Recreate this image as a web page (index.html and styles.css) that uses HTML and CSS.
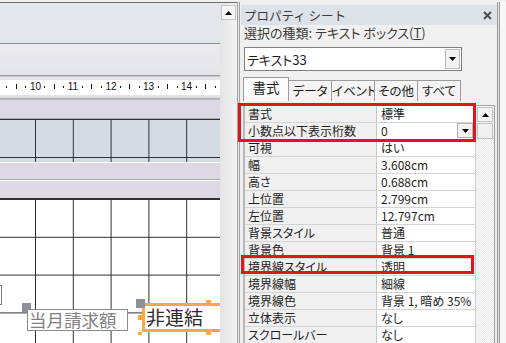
FILE: index.html
```html
<!DOCTYPE html>
<html lang="ja">
<head>
    <meta charset="utf-8">
    <title>プロパティ シート</title>
    <link rel="stylesheet" href="styles.css">
</head>
<body>
<div class="screen">
    <div class="design">
        <div class="sec-top"></div>
        <div class="sec-head"></div>
        <div class="ruler-wrap">
            <svg class="ruler" width="220" height="15" viewBox="0 0 220 15">
                <g fill="#111">
                    <rect x="6" y="6" width="1" height="2"/><rect x="16" y="4" width="1" height="5"/><rect x="25" y="6" width="1" height="2"/>
                    <rect x="44" y="6" width="1" height="2"/><rect x="54" y="4" width="1" height="5"/><rect x="63" y="6" width="1" height="2"/>
                    <rect x="82" y="6" width="1" height="2"/><rect x="91" y="4" width="1" height="5"/><rect x="101" y="6" width="1" height="2"/>
                    <rect x="120" y="6" width="1" height="2"/><rect x="129" y="4" width="1" height="5"/><rect x="139" y="6" width="1" height="2"/>
                    <rect x="158" y="6" width="1" height="2"/><rect x="167" y="4" width="1" height="5"/><rect x="177" y="6" width="1" height="2"/>
                    <rect x="196" y="6" width="1" height="2"/><rect x="205" y="4" width="1" height="5"/><rect x="215" y="6" width="1" height="2"/>
                </g>
                <g class="ruler-num" text-anchor="middle">
                    <text x="35.5" y="10">10</text>
                    <text x="73" y="10">11</text>
                    <text x="111" y="10">12</text>
                    <text x="148.5" y="10">13</text>
                    <text x="186.5" y="10">14</text>
                </g>
            </svg>
        </div>
        <div class="bar"></div>
        <div class="band"></div>
        <div class="bar bar-2"></div>
        <div class="bar bar-3"></div>
        <div class="detail">
            <div class="ctl-off"></div>
            <div class="grip grip-a"></div>
            <div class="ctl-label">当月請求額</div>
            <div class="ctl-text">非連結</div>
            <div class="grip grip-b"></div>
            <div class="knob knob-top"></div>
            <div class="knob knob-left"></div>
            <div class="knob knob-bl"></div>
            <div class="knob knob-bm"></div>
        </div>
    </div>

    <div class="vscroll">
        <div class="sbtn">
            <svg width="7" height="4" viewBox="0 0 7 4"><path d="M0 4h7L3.5 0z" fill="#000"/></svg>
        </div>
    </div>
    <div class="split"></div>

    <div class="props">
        <div class="props-title">
            <span>プロパティ シート</span>
            <svg width="9" height="9" viewBox="0 0 9 9"><path d="M1 1l7 7M8 1L1 8" stroke="#4e4e4e" stroke-width="2"/></svg>
        </div>
        <div class="props-type">選択の種類: テキスト ボックス(<u>T</u>)</div>
        <div class="combo">
            <span>テキスト33</span>
            <div class="combo-btn">
                <svg width="7" height="4" viewBox="0 0 7 4"><path d="M0 0h7L3.5 4z" fill="#000"/></svg>
            </div>
        </div>
        <div class="tabs">
            <div class="tab active">書式</div>
            <div class="tab">データ</div>
            <div class="tab">イベント</div>
            <div class="tab">その他</div>
            <div class="tab">すべて</div>
        </div>
        <div class="sheet">
            <div class="rows">
                <div class="row"><div class="key">書式</div><div class="val">標準</div></div>
                <div class="row"><div class="key">小数点以下表示桁数</div><div class="val">0
                    <div class="val-btn"><svg width="7" height="4" viewBox="0 0 7 4"><path d="M0 0h7L3.5 4z" fill="#000"/></svg></div>
                </div></div>
                <div class="row"><div class="key">可視</div><div class="val">はい</div></div>
                <div class="row"><div class="key">幅</div><div class="val">3.608cm</div></div>
                <div class="row"><div class="key">高さ</div><div class="val">0.688cm</div></div>
                <div class="row"><div class="key">上位置</div><div class="val">2.799cm</div></div>
                <div class="row"><div class="key">左位置</div><div class="val">12.797cm</div></div>
                <div class="row"><div class="key">背景スタイル</div><div class="val">普通</div></div>
                <div class="row"><div class="key">背景色</div><div class="val">背景 1</div></div>
                <div class="row"><div class="key">境界線スタイル</div><div class="val">透明</div></div>
                <div class="row"><div class="key">境界線幅</div><div class="val">細線</div></div>
                <div class="row"><div class="key">境界線色</div><div class="val">背景 1, 暗め 35%</div></div>
                <div class="row"><div class="key">立体表示</div><div class="val">なし</div></div>
                <div class="row"><div class="key">スクロールバー</div><div class="val">なし</div></div>
            </div>
            <div class="sheet-scroll">
                <div class="sbtn">
                    <svg width="7" height="4" viewBox="0 0 7 4"><path d="M0 4h7L3.5 0z" fill="#000"/></svg>
                </div>
                <div class="thumb"></div>
            </div>
        </div>
    </div>
    <div class="frame"></div>

    <div class="mark mark-1"></div>
    <div class="mark mark-2"></div>
</div>
</body>
</html>
```

FILE: styles.css
```css
html, body {
    margin: 0;
    background-color: #f0f0f0;
}

.screen {
    position: relative;
    display: flex;
    width: 506px;
    height: 343px;
    padding-top: 2px;
    box-sizing: border-box;
    overflow: hidden;
    font-family: "Noto Sans CJK JP", sans-serif;
    color: #1e1e1e;
}

/* left: form design view */
.design {
    width: 220px;
    flex: none;
    display: flex;
    flex-direction: column;
    border-top: 1px solid #6d6d6d;
    overflow: hidden;
}
.sec-top {
    height: 40px;
    background-color: #e3e6eb;
    border-bottom: 1px solid #8a8e95;
}
.sec-head {
    height: 31px;
    background: linear-gradient(#ececf0, #e3e4e9);
    border-bottom: 1px solid #9a9aa0;
}
.ruler-wrap {
    border-top: 1px solid #c6c6cb;
    padding: 3px 0 5px;
    background: linear-gradient(#e4e4e8 0 20px, #d6d6da 20px 21px, #b5b5bb 21px 23px, #e4e4e8 23px);
}
.ruler {
    display: block;
    background-color: #fff;
}
.ruler-num {
    font-family: "Liberation Sans", sans-serif;
    font-size: 10px;
    fill: #111;
}
.bar {
    height: 18px;
    background-color: #dcd9e4;
    border-bottom: 1px solid #a9a9b0;
}
.bar-2 {
    height: 16px;
    border-top: 1px solid #fff;
}
.bar-3 {
    height: 17px;
    border-top: 1px solid #fff;
    border-bottom-color: #2f2f2f;
}
.band {
    height: 43px;
    background-color: #d5dbe4;
    background-image:
        linear-gradient(#2f2f2f, #2f2f2f),
        linear-gradient(#2f2f2f, #2f2f2f),
        linear-gradient(to right, #2f2f2f 1px, transparent 1px);
    background-size: 100% 1px, 100% 1px, 37.8px 100%;
    background-position: 0 0, 0 38px, 35px 0;
    background-repeat: no-repeat, no-repeat, repeat;
}
.detail {
    position: relative;
    flex: 1;
    background-color: #fff;
    background-image:
        linear-gradient(#2f2f2f 1px, transparent 1px),
        linear-gradient(to right, #2f2f2f 1px, transparent 1px);
    background-size: 100% 37.8px, 37.8px 100%;
    background-position: 0 37.8px, 35px 0;
}
.ctl-off {
    position: absolute;
    left: -40px;
    top: 86px;
    width: 42px;
    height: 20px;
    box-sizing: border-box;
    border: 1px solid #7d7d7d;
    background-color: #fff;
}
.grip {
    position: absolute;
    width: 9px;
    height: 9px;
    background-color: #8b9099;
}
.grip-a { left: 22px; top: 104px; }
.grip-b { left: 136px; top: 100px; }
.ctl-label {
    position: absolute;
    left: 27px;
    top: 110px;
    width: 101px;
    height: 22px;
    box-sizing: border-box;
    border: 1px solid #8a8a8a;
    background-color: #fff;
    padding-left: 1px;
    font-size: 17.5px;
    line-height: 20px;
    color: #808080;
    white-space: nowrap;
}
.ctl-text {
    position: absolute;
    left: 142px;
    top: 104px;
    width: 110px;
    height: 29px;
    box-sizing: border-box;
    border: 3px solid #ffa83c;
    background-color: #fff;
    padding-left: 1px;
    font-size: 19px;
    line-height: 22px;
    color: #2b2b2b;
    white-space: nowrap;
}
.knob {
    position: absolute;
    background-color: #ffa83c;
}
.knob-top { left: 206px; top: 101px; width: 5px; height: 3px; }
.knob-left { left: 138px; top: 116px; width: 4px; height: 5px; }
.knob-bl { left: 138px; top: 133px; width: 4px; height: 3px; }
.knob-bm { left: 206px; top: 133px; width: 5px; height: 3px; }

.vscroll {
    width: 17px;
    flex: none;
    border-top: 1px solid #6d6d6d;
    background: linear-gradient(to right, #e4e4e4, #f2f2f2);
}
.sbtn {
    display: flex;
    align-items: center;
    justify-content: center;
    width: 15px;
    height: 15px;
    margin: 1px;
    box-sizing: border-box;
    background-color: #f5f5f5;
    border: 1px solid #c4c4c4;
}
.vscroll .sbtn {
    margin-top: 2px;
}
.split {
    width: 3px;
    flex: none;
    background: linear-gradient(to right, #a3a3a3 0 1px, #e6e6e6 1px 2px, #a3a3a3 2px);
}

/* right: property sheet */
.props {
    width: 257px;
    flex: none;
    padding-top: 3px;
    font-size: 12px;
    font-feature-settings: "palt";
}
.props-title {
    display: flex;
    align-items: center;
    justify-content: space-between;
    height: 20px;
    margin-left: 1px;
    padding: 0 5px 0 3px;
    background-color: #dde2e9;
    font-size: 12.5px;
    color: #3a3a3a;
    font-feature-settings: normal;
}
.props-type {
    height: 16px;
    line-height: 16px;
    padding-left: 4px;
    color: #3a3a3a;
    font-size: 13px;
    white-space: nowrap;
}
.combo {
    display: flex;
    align-items: center;
    justify-content: space-between;
    width: 218px;
    height: 24px;
    margin: 6px 0 0 4px;
    box-sizing: border-box;
    border: 1px solid #7f7f7f;
    background-color: #fff;
    padding-left: 2px;
    font-size: 13px;
}
.combo-btn {
    display: flex;
    align-items: center;
    justify-content: center;
    width: 15px;
    height: 20px;
    margin-right: 1px;
    box-sizing: border-box;
    background-color: #f2f2f2;
    border: 1px solid #b9b9b9;
}
.tabs {
    display: flex;
    align-items: flex-end;
    height: 24px;
    margin: 6px 0 0 3px;
}
.tab {
    width: 44px;
    height: 21px;
    box-sizing: border-box;
    margin-left: -1px;
    border: 1px solid #9c9c9c;
    border-bottom: none;
    background-color: #f4f4f4;
    text-align: center;
    line-height: 20px;
    font-size: 12.5px;
    white-space: nowrap;
}
.tab.active {
    width: 46px;
    height: 24px;
    margin-left: 0;
    background-color: #fbfbfb;
    font-size: 13.5px;
    line-height: 19px;
}

.sheet {
    display: flex;
    margin: 0 0 0 3px;
    padding-top: 4px;
}
.rows {
    width: 233px;
    box-sizing: border-box;
    border-top: 1px solid #a8a8a8;
    border-left: 2px solid #b8b8b8;
    border-right: 1px solid #cfcfcf;
}
.row {
    display: grid;
    grid-template-columns: 132px 1fr;
    height: 16px;
    border-bottom: 1px solid #d4d4d4;
    line-height: 16px;
}
.key {
    padding-left: 3px;
    background-color: #f0f0f0;
    border-right: 1px solid #c8c8c8;
    white-space: nowrap;
}
.val {
    display: flex;
    justify-content: space-between;
    padding-left: 4px;
    background-color: #fff;
    white-space: nowrap;
    overflow: hidden;
}
.val-btn {
    display: flex;
    align-items: center;
    justify-content: center;
    width: 16px;
    height: 15px;
    margin-right: 2px;
    box-sizing: border-box;
    background-color: #f2f2f2;
    border: 1px solid #b4b4b4;
}
.sheet-scroll {
    width: 18px;
    border-top: 1px solid #a8a8a8;
    border-right: 1px solid #a0a0a0;
    background-color: #f6f6f6;
    background-image: repeating-conic-gradient(#e9e9e9 0 25%, #fbfbfb 0 50%);
    background-size: 2px 2px;
}
.sheet-scroll .sbtn {
    width: 16px;
}
.thumb {
    width: 16px;
    height: 16px;
    margin: 0 1px;
    box-sizing: border-box;
    background-color: #f0f0f0;
    border: 1px solid #c4c4c4;
}
.frame {
    flex: 1;
    background: linear-gradient(to right, #9c9c9c 0 1px, #e2e2e2 1px 2px, #9c9c9c 2px 3px, #f7f7f7 3px);
}

.mark {
    position: absolute;
    box-sizing: border-box;
    border: 3px solid #e3141e;
}
.mark-1 { left: 238px; top: 103px; width: 238px; height: 39px; }
.mark-2 { left: 241px; top: 255px; width: 233px; height: 19px; }
```
